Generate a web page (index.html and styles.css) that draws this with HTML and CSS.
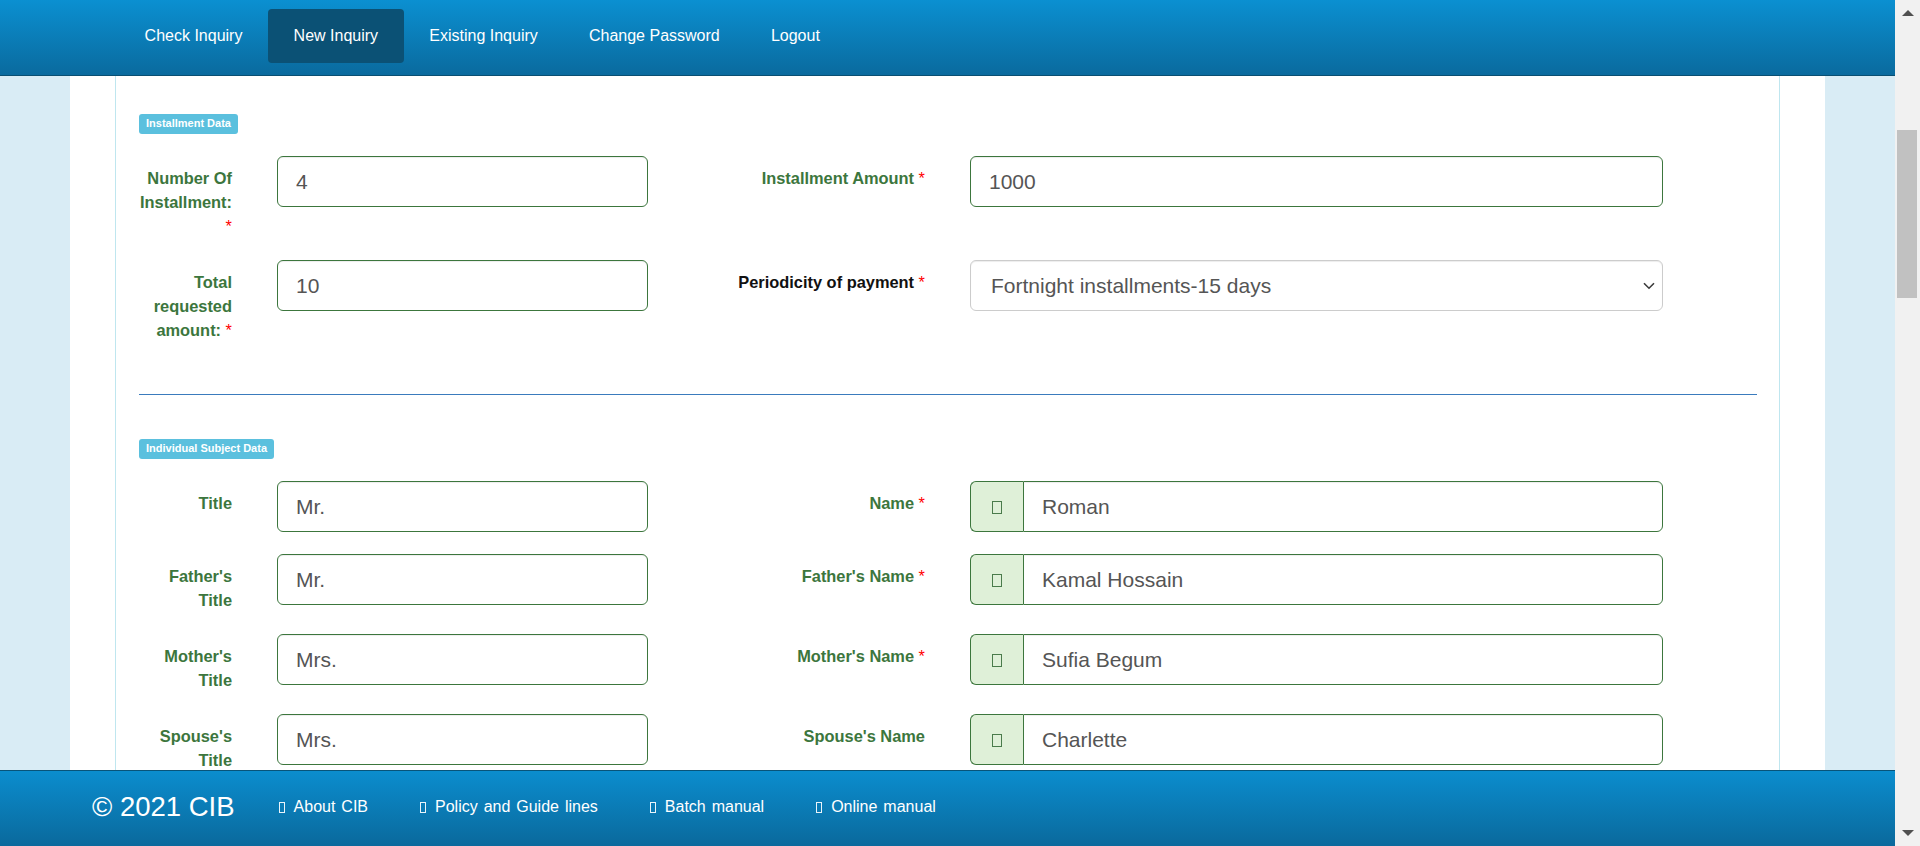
FILE: index.html
```html
<!DOCTYPE html>
<html lang="en">
<head>
<meta charset="utf-8">
<title>New Inquiry - CIB</title>
<link rel="stylesheet" href="styles.css">
</head>
<body>
<div class="screen">
  <div class="viewport">
    <header class="topbar">
      <nav class="nav">
        <a class="nav-item">Check Inquiry</a>
        <a class="nav-item active">New Inquiry</a>
        <a class="nav-item">Existing Inquiry</a>
        <a class="nav-item">Change Password</a>
        <a class="nav-item">Logout</a>
      </nav>
    </header>

    <main class="main">
      <div class="container">
        <div class="panel">
          <section class="section first">
            <span class="badge">Installment Data</span>
            <div class="row">
              <label class="lbl">Number Of Installment: <span class="req">*</span></label>
              <input class="ctl" type="text" value="4">
              <label class="lbl">Installment Amount <span class="req">*</span></label>
              <input class="ctl" type="text" value="1000">
            </div>
            <div class="row">
              <label class="lbl">Total requested amount: <span class="req">*</span></label>
              <input class="ctl" type="text" value="10">
              <label class="lbl plain">Periodicity of payment <span class="req">*</span></label>
              <div class="selwrap">
                <select class="ctl sel">
                  <option>Fortnight installments-15 days</option>
                </select>
                <svg class="chev" width="12" height="8" viewBox="0 0 12 8" aria-hidden="true"><path d="M1 1.2 L6 6.2 L11 1.2" fill="none" stroke="#3a3a3a" stroke-width="1.6"/></svg>
              </div>
            </div>
          </section>

          <hr class="divider">

          <section class="section">
            <span class="badge">Individual Subject Data</span>
            <div class="row">
              <label class="lbl">Title</label>
              <input class="ctl" type="text" value="Mr.">
              <label class="lbl">Name <span class="req">*</span></label>
              <div class="igroup"><span class="addon"><span class="tofu"></span></span><input class="ctl" type="text" value="Roman"></div>
            </div>
            <div class="row">
              <label class="lbl">Father's Title</label>
              <input class="ctl" type="text" value="Mr.">
              <label class="lbl">Father's Name <span class="req">*</span></label>
              <div class="igroup"><span class="addon"><span class="tofu"></span></span><input class="ctl" type="text" value="Kamal Hossain"></div>
            </div>
            <div class="row">
              <label class="lbl">Mother's Title</label>
              <input class="ctl" type="text" value="Mrs.">
              <label class="lbl">Mother's Name <span class="req">*</span></label>
              <div class="igroup"><span class="addon"><span class="tofu"></span></span><input class="ctl" type="text" value="Sufia Begum"></div>
            </div>
            <div class="row">
              <label class="lbl">Spouse's Title</label>
              <input class="ctl" type="text" value="Mrs.">
              <label class="lbl">Spouse's Name</label>
              <div class="igroup"><span class="addon"><span class="tofu"></span></span><input class="ctl" type="text" value="Charlette"></div>
            </div>
          </section>
        </div>
      </div>
    </main>

    <footer class="footer">
      <div class="foot-inner">
        <span class="copy">© 2021 CIB</span>
        <a class="flink"><span class="ftofu"></span>About CIB</a>
        <a class="flink"><span class="ftofu"></span>Policy and Guide lines</a>
        <a class="flink"><span class="ftofu"></span>Batch manual</a>
        <a class="flink"><span class="ftofu"></span>Online manual</a>
      </div>
    </footer>
  </div>

  <div class="scrollbar">
    <div class="sb-btn"><span class="arrow-up"></span></div>
    <div class="sb-track"><div class="sb-thumb"></div></div>
    <div class="sb-btn"><span class="arrow-down"></span></div>
  </div>
</div>
</body>
</html>
```

FILE: styles.css
```css
* { box-sizing: border-box; }

html, body {
  margin: 0;
  padding: 0;
  height: 846px;
  overflow: hidden;
}

body {
  font-family: "Liberation Sans", Arial, sans-serif;
  font-size: 16px;
  color: #333;
}

.screen {
  display: flex;
  width: 1920px;
  height: 846px;
}

.viewport {
  flex: 1;
  display: flex;
  flex-direction: column;
  min-width: 0;
}

/* ---------- top bar ---------- */
.topbar {
  height: 76px;
  flex: none;
  background: linear-gradient(#0b90d1, #0a6a9e);
  border-bottom: 1px solid #094f72;
}

.nav {
  width: 1755px;
  margin: 0 auto;
  padding: 9px 0 0 49px;
  display: flex;
}

.nav-item {
  display: block;
  height: 54px;
  line-height: 53px;
  padding: 0 25.6px;
  color: #fff;
  font-size: 16px;
  border-radius: 4px;
  text-decoration: none;
}

.nav-item.active {
  background: #0b5175;
}

/* ---------- main ---------- */
.main {
  flex: 1;
  overflow: hidden;
  background: #d9ecf5;
  min-height: 0;
}

.container {
  width: 1755px;
  height: 100%;
  margin: 0 auto;
  background: #fff;
}

.panel {
  height: 100%;
  margin: 0 45px;
  padding: 0 22px 0 23px;
  border-left: 1px solid #bfe6ef;
  border-right: 1px solid #bfe6ef;
}

.section.first {
  padding-top: 38px;
}

.badge {
  display: block;
  width: max-content;
  padding: 3px 7px 4px;
  margin-bottom: 22px;
  background: #5bc0de;
  color: #fff;
  font-size: 11px;
  line-height: 13px;
  font-weight: bold;
  border-radius: 3px;
}

.row {
  display: grid;
  grid-template-columns: 108px 371px 262px 693px;
  column-gap: 30px;
  align-items: start;
  margin-bottom: 22px;
}

.lbl {
  margin-left: -4px;
  padding: 10px 15px 0 0;
  text-align: right;
  font-size: 16.4px;
  line-height: 24px;
  font-weight: bold;
  color: #3c763d;
}

.lbl.plain {
  color: #111;
}

.req {
  color: #f00;
  font-weight: normal;
}

.ctl {
  display: block;
  width: 100%;
  height: 51px;
  padding: 0 18px;
  font-family: "Liberation Sans", Arial, sans-serif;
  font-size: 21px;
  color: #555;
  background: #fff;
  border: 1px solid #3c763d;
  border-radius: 6px;
  box-shadow: inset 0 1px 1px rgba(0, 0, 0, 0.075);
  outline: none;
}

.selwrap {
  position: relative;
}

.sel {
  -webkit-appearance: none;
  appearance: none;
  border-color: #ccc;
  padding-left: 20px;
  padding-right: 30px;
}

.chev {
  position: absolute;
  right: 8px;
  top: 22px;
  pointer-events: none;
}

.igroup {
  display: flex;
  height: 51px;
}

.addon {
  flex: none;
  width: 53px;
  display: flex;
  align-items: center;
  justify-content: center;
  background: #dff0d8;
  border: 1px solid #3c763d;
  border-right: 0;
  border-radius: 6px 0 0 6px;
}

.igroup .ctl {
  flex: 1;
  border-radius: 0 6px 6px 0;
  border-left: 1px solid #3c763d;
}

.tofu {
  display: block;
  width: 10px;
  height: 13px;
  margin-top: 2px;
  border: 1px solid #4a7b4b;
}

.divider {
  margin: 52px 0 44px;
  border: 0;
  border-top: 1px solid #3a7bbd;
  height: 0;
}

/* ---------- footer ---------- */
.footer {
  height: 76px;
  flex: none;
  background: linear-gradient(#0b8dce, #0a699c);
  border-top: 1px solid #08547a;
}

.foot-inner {
  width: 1755px;
  height: 100%;
  margin: 0 auto;
  padding: 0 0 3px 22px;
  display: flex;
  align-items: center;
  gap: 50px;
  color: #fff;
}

.copy {
  font-size: 27.5px;
  margin-right: -8px;
}

.flink {
  display: flex;
  align-items: center;
  font-size: 16px;
  word-spacing: 1.5px;
  color: #fff;
  text-decoration: none;
}

.ftofu {
  display: block;
  width: 6px;
  height: 11px;
  margin: 0 9px 0 2px;
  border: 1px solid #eaf4fa;
}

/* ---------- scrollbar ---------- */
.scrollbar {
  flex: none;
  width: 25px;
  height: 846px;
  background: #f1f1f1;
  display: flex;
  flex-direction: column;
}

.sb-btn {
  height: 26px;
  flex: none;
  display: flex;
  align-items: center;
  justify-content: center;
}

.arrow-up {
  width: 0;
  height: 0;
  border-left: 6px solid transparent;
  border-right: 6px solid transparent;
  border-bottom: 6px solid #505050;
}

.arrow-down {
  width: 0;
  height: 0;
  border-left: 6px solid transparent;
  border-right: 6px solid transparent;
  border-top: 6px solid #505050;
}

.sb-track {
  flex: 1;
  padding: 104px 3px 0 2px;
}

.sb-thumb {
  height: 168px;
  background: #c1c1c1;
}
```
